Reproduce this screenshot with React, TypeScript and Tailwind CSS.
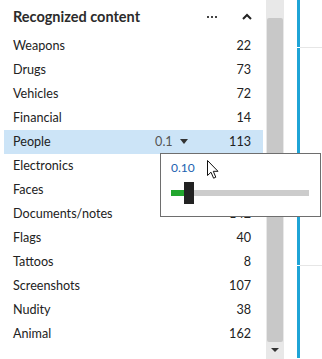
const rows = [
  { name: 'Weapons', count: 22 },
  { name: 'Drugs', count: 73 },
  { name: 'Vehicles', count: 72 },
  { name: 'Financial', count: 14 },
  { name: 'People', count: 113, threshold: '0.1' },
  { name: 'Electronics', count: 51 },
  { name: 'Faces', count: 96 },
  { name: 'Documents/notes', count: 142 },
  { name: 'Flags', count: 40 },
  { name: 'Tattoos', count: 8 },
  { name: 'Screenshots', count: 107 },
  { name: 'Nudity', count: 38 },
  { name: 'Animal', count: 162 },
];

const Cursor = () => (
  <svg width="13" height="20" viewBox="0 0 13 20" className="absolute left-[207px] top-[160px]">
    <path d="M0.5 0.5 L0.5 15.5 L4 12.2 L6.6 18.2 L8.8 17.2 L6.3 11.3 L11 11.3 Z" fill="#fff" stroke="#111" strokeWidth="1" strokeLinejoin="round" />
  </svg>
);

const ThresholdPopup = () => (
  <div className="absolute left-[160px] top-[153px] h-[64px] w-[161px] border border-[#6e6e6e] bg-white">
    <div className="absolute left-[10px] top-[6px] text-[12px] leading-[16px] text-[#2162b0]">0.10</div>
    <div className="absolute left-[10px] top-[36px] h-[6px] w-[138px] bg-[#cccccc]">
      <div className="h-full w-[14px] bg-[#22a62e]" />
    </div>
    <div className="absolute left-[23px] top-[28px] h-[22px] w-[10px] bg-[#222222]" />
  </div>
);

export default function App() {
  return (
    <div className="relative flex h-[359px] w-[322px] overflow-hidden bg-white text-[#222] [font-family:'Segoe_UI','Lato',sans-serif]">
      <div className="flex w-[266px] flex-col">
        <div className="flex h-[34px] items-center pl-[13px] pr-[14px] pb-[1px]">
          <span className="text-[14.5px] font-bold text-[#2b2b2b]">Recognized content</span>
          <span className="ml-auto mr-[25px] flex gap-[2px] pt-[1px]">
            <span className="h-[2px] w-[2px] bg-[#444]" />
            <span className="h-[2px] w-[2px] bg-[#444]" />
            <span className="h-[2px] w-[2px] bg-[#444]" />
          </span>
          <svg width="10" height="7" viewBox="0 0 10 7">
            <path d="M1 6 L5 2 L9 6" fill="none" stroke="#222" strokeWidth="2" />
          </svg>
        </div>
        <div className="flex flex-col pl-1 pr-[3px]">
          {rows.map((r) => (
            <div
              key={r.name}
              className={`flex h-[24px] items-center pl-[9px] pr-3 text-[12.6px] ${r.threshold ? 'bg-[#cce4f7]' : ''}`}
            >
              <span>{r.name}</span>
              {r.threshold && (
                <span className="ml-auto mr-[10px] flex w-[64px] items-center text-[#555]">
                  {r.threshold}
                  <svg width="8" height="5" viewBox="0 0 8 5" className="ml-[7px]">
                    <path d="M0 0 L8 0 L4 5 Z" fill="#333" />
                  </svg>
                </span>
              )}
              <span className={r.threshold ? '' : 'ml-auto'}>{r.count}</span>
            </div>
          ))}
        </div>
      </div>
      <div className="relative w-[18px] bg-[#e8e8e8]">
        <div className="absolute left-[1px] top-[18px] h-[324px] w-[16px] rounded-[2px] bg-[#c8c8c8]" />
        <svg width="8" height="5" viewBox="0 0 8 5" className="absolute left-[5px] top-[348px]">
          <path d="M0 0 L8 0 L4 4 Z" fill="#333" />
        </svg>
      </div>
      <div className="w-[13px]" />
      <div className="flex w-[3px] flex-col">
        <div className="h-[47px] bg-[#1fa4d6]" />
        <div className="h-[1px]" />
        <div className="h-[217px] bg-[#1fa4d6]" />
        <div className="h-[1px]" />
        <div className="h-[92px] bg-[#1fa4d6]" />
      </div>
      <div className="flex flex-1 flex-col">
        <div className="h-[47px]" />
        <div className="h-[1px] bg-[#e6e6e6]" />
        <div className="h-[217px]" />
        <div className="h-[1px] bg-[#e6e6e6]" />
      </div>
      <ThresholdPopup />
      <Cursor />
    </div>
  );
}
